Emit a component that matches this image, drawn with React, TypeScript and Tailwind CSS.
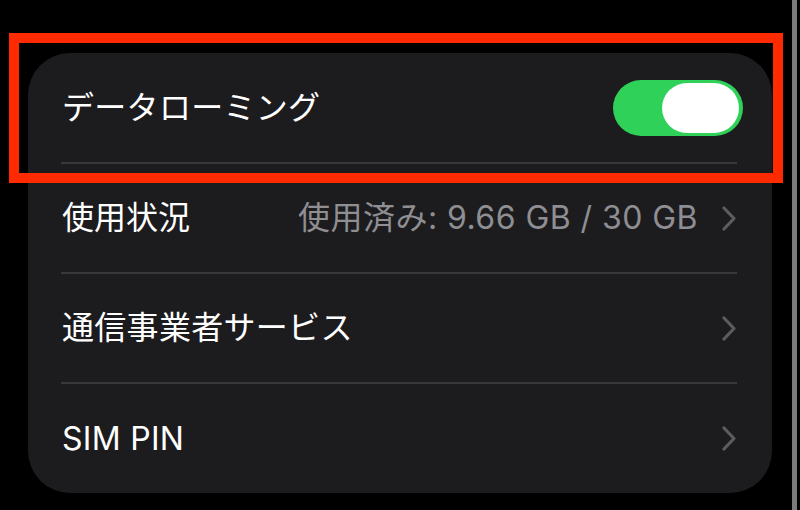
const font = { fontFamily: 'Inter, "Noto Sans CJK JP", sans-serif' }

const Chevron = () => (
  <svg width="14" height="25" viewBox="0 0 14 25" fill="none">
    <path d="M2 2l10 10.5L2 23" stroke="#5b5b60" strokeWidth="3.2" strokeLinecap="round" strokeLinejoin="round" />
  </svg>
)

const Separator = () => <div className="ml-[33px] mr-[35px] h-[2px] bg-[#38383a]" />

const App = () => {
  return (
    <div className="w-[800px] h-[510px] bg-black flex overflow-hidden" style={font}>
      <div className="relative w-[792px] h-full">
        <div className="ml-[28px] mt-[53px] w-[744px] h-[440px] rounded-[42px] bg-[#1c1c1e] flex flex-col">
          <div className="h-[109px] flex items-center justify-between pl-[34px] pr-[29px]">
            <span className="text-[32px] text-white tracking-[0.3px]">データローミング</span>
            <div className="w-[130px] h-[56px] rounded-full bg-[#30d158] flex items-center justify-end pr-[4px]">
              <div className="w-[77px] h-[50px] rounded-full bg-white" />
            </div>
          </div>
          <Separator />
          <div className="h-[108px] flex items-center justify-between pl-[34px] pr-[36px]">
            <span className="text-[32px] text-white">使用状況</span>
            <div className="flex items-center gap-[24px]">
              <span className="text-[32px] text-[#8e8e93] tracking-[0.45px]">使用済み: 9.66 GB / 30 GB</span>
              <Chevron />
            </div>
          </div>
          <Separator />
          <div className="h-[108px] flex items-center justify-between pl-[34px] pr-[36px]">
            <span className="text-[32px] text-white tracking-[0.3px]">通信事業者サービス</span>
            <Chevron />
          </div>
          <Separator />
          <div className="flex-1 flex items-center justify-between pl-[34px] pr-[36px]">
            <span className="text-[32px] text-white tracking-[0.3px]">SIM PIN</span>
            <Chevron />
          </div>
        </div>
        <div className="absolute left-[9px] top-[33px] w-[774px] h-[150px] border-[10px] border-[#ff2a00]" />
      </div>
      <div className="w-[5px] h-full bg-[#7b7b7b]" />
    </div>
  )
}

export default App
